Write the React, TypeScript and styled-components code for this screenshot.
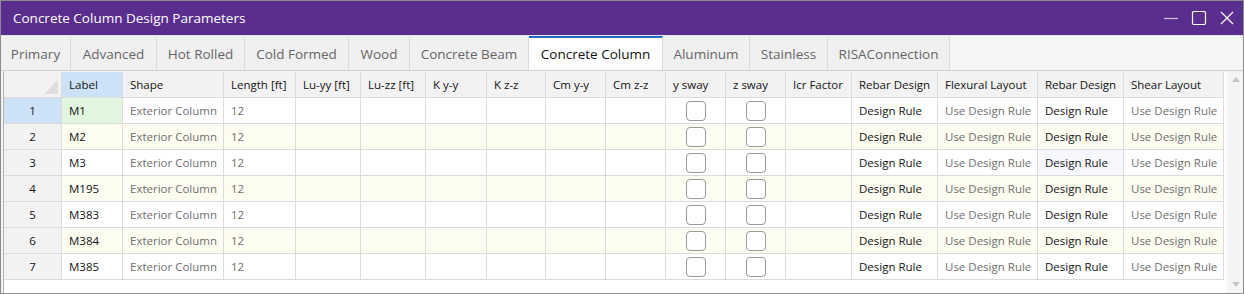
import * as React from 'react';
import styled, { createGlobalStyle } from 'styled-components';

const GlobalStyle = createGlobalStyle`
  html, body {
    margin: 0;
    padding: 0;
    background: #fff;
  }
  body {
    font-family: 'Open Sans', 'Noto Sans', 'Liberation Sans', sans-serif;
  }
`;

const Window = styled.div`
  width: 1244px;
  height: 294px;
  box-sizing: border-box;
  border: 1px solid #8c8c8c;
  background: #f3f3f3;
  display: flex;
  flex-direction: column;
  overflow: hidden;
`;

const TitleBar = styled.div`
  height: 34px;
  flex: none;
  background: #5a2e8f;
  color: #fff;
  display: flex;
  align-items: center;
  justify-content: space-between;
  padding: 0 8px 0 12px;
  font-size: 13.5px;
`;

const WindowButtons = styled.div`
  display: flex;
  align-items: center;
  gap: 12px;
`;

const TabStrip = styled.div`
  height: 36px;
  flex: none;
  box-sizing: border-box;
  display: flex;
  border-top: 1px solid #e2e2e2;
  border-bottom: 1px solid #d4d4d4;
  background: #f5f5f5;
`;

const Tab = styled.div<{ $w: number; $active?: boolean }>`
  width: ${(p) => p.$w}px;
  flex: none;
  box-sizing: border-box;
  display: flex;
  align-items: center;
  justify-content: center;
  font-size: 13.5px;
  border-right: 1px solid #dadada;
  border-top: 2px solid ${(p) => (p.$active ? '#1c6fc4' : 'transparent')};
  background: ${(p) => (p.$active ? '#fff' : '#f0f0f0')};
  color: ${(p) => (p.$active ? '#111' : '#666')};
  padding-bottom: 1px;
`;

const Panel = styled.div`
  flex: 1;
  margin: 0 0 0 2px;
  border-left: 1px solid #b4b4b4;
  border-top: 1px solid #f0f0f0;
  background: #fff;
  display: flex;
`;

const Grid = styled.div`
  display: flex;
  flex-direction: column;
`;

const Row = styled.div`
  display: flex;
  height: 26px;
`;

type Tone = 'head' | 'rowhead' | 'sel' | 'plain' | 'alt' | 'green' | 'hover';

const tones: Record<Tone, string> = {
  head: '#f2f2f2',
  rowhead: '#f2f2f2',
  sel: '#cde2f6',
  plain: '#ffffff',
  alt: '#fdfcf1',
  green: '#e2f5df',
  hover: '#f7f7fe',
};

const Cell = styled.div<{ $w: number; $tone: Tone; $muted?: boolean; $center?: boolean }>`
  width: ${(p) => p.$w}px;
  flex: none;
  box-sizing: border-box;
  height: 26px;
  position: relative;
  display: flex;
  align-items: center;
  justify-content: ${(p) => (p.$center ? 'center' : 'flex-start')};
  padding-left: ${(p) => (p.$center ? 0 : 7)}px;
  border-right: 1px solid #dcdcdc;
  border-bottom: 1px solid #dcdcdc;
  background: ${(p) => tones[p.$tone]};
  color: ${(p) => (p.$muted ? '#707070' : '#141414')};
  font-size: 11.5px;
  white-space: nowrap;
  overflow: hidden;
`;

const CornerMark = styled.div`
  position: absolute;
  right: 3px;
  bottom: 3px;
  width: 0;
  height: 0;
  border-left: 14px solid transparent;
  border-bottom: 14px solid #dedede;
`;

const Check = styled.div`
  width: 20px;
  height: 20px;
  box-sizing: border-box;
  border: 1px solid #9a9a9a;
  border-radius: 4px;
  background: #fff;
`;

const ScrollBar = styled.div`
  width: 17px;
  margin-left: 3px;
  flex: none;
  background: #f4f4f4;
  display: flex;
  flex-direction: column;
  justify-content: space-between;
  align-items: center;
  padding: 5px 0 6px;
  box-sizing: border-box;
`;

const Arrow = styled.div<{ $down?: boolean }>`
  width: 0;
  height: 0;
  border-left: 4px solid transparent;
  border-right: 4px solid transparent;
  ${(p) => (p.$down ? 'border-top: 5px solid #c6c6c6;' : 'border-bottom: 5px solid #c6c6c6;')}
`;

const tabs: [string, number][] = [
  ['Primary', 70],
  ['Advanced', 86],
  ['Hot Rolled', 88],
  ['Cold Formed', 104],
  ['Wood', 61],
  ['Concrete Beam', 119],
  ['Concrete Column', 134],
  ['Aluminum', 87],
  ['Stainless', 78],
  ['RISAConnection', 122],
];

const columns: [string, number][] = [
  ['', 58],
  ['Label', 61],
  ['Shape', 101],
  ['Length [ft]', 72],
  ['Lu-yy [ft]', 65],
  ['Lu-zz [ft]', 65],
  ['K y-y', 61],
  ['K z-z', 59],
  ['Cm y-y', 60],
  ['Cm z-z', 60],
  ['y sway', 60],
  ['z sway', 60],
  ['Icr Factor', 66],
  ['Rebar Design', 86],
  ['Flexural Layout', 100],
  ['Rebar Design', 86],
  ['Shear Layout', 100],
];

const labels = ['M1', 'M2', 'M3', 'M195', 'M383', 'M384', 'M385'];

const w = (i: number) => columns[i][1];

const App = () => {
  return (
    <Window>
      <GlobalStyle />
      <TitleBar>
        <span>Concrete Column Design Parameters</span>
        <WindowButtons>
          <svg width="16" height="14" viewBox="0 0 16 14">
            <line x1="1" y1="7.5" x2="15" y2="7.5" stroke="#cfc4e0" strokeWidth="1.2" />
          </svg>
          <svg width="16" height="14" viewBox="0 0 16 14">
            <rect x="1.5" y="0.5" width="13" height="13" rx="1.5" fill="none" stroke="#fff" strokeWidth="1.2" />
          </svg>
          <svg width="16" height="14" viewBox="0 0 16 14">
            <path d="M2 1 L14 13 M14 1 L2 13" stroke="#fff" strokeWidth="1.2" />
          </svg>
        </WindowButtons>
      </TitleBar>
      <TabStrip>
        {tabs.map(([name, width]) => (
          <Tab key={name} $w={width} $active={name === 'Concrete Column'}>
            {name}
          </Tab>
        ))}
      </TabStrip>
      <Panel>
        <Grid>
          <Row>
            {columns.map(([name, width], i) => (
              <Cell key={i} $w={width} $tone={i === 1 ? 'sel' : 'head'}>
                {name}
                {i === 0 && <CornerMark />}
              </Cell>
            ))}
          </Row>
          {labels.map((label, r) => {
            const tone: Tone = r % 2 === 1 ? 'alt' : 'plain';
            return (
              <Row key={label}>
                <Cell $w={w(0)} $tone={r === 0 ? 'sel' : 'rowhead'} $center>
                  {r + 1}
                </Cell>
                <Cell $w={w(1)} $tone={r === 0 ? 'green' : tone}>
                  {label}
                </Cell>
                <Cell $w={w(2)} $tone={tone} $muted>
                  Exterior Column
                </Cell>
                <Cell $w={w(3)} $tone={tone} $muted>
                  12
                </Cell>
                {[4, 5, 6, 7, 8, 9].map((c) => (
                  <Cell key={c} $w={w(c)} $tone={tone} />
                ))}
                <Cell $w={w(10)} $tone={tone} $center>
                  <Check />
                </Cell>
                <Cell $w={w(11)} $tone={tone} $center>
                  <Check />
                </Cell>
                <Cell $w={w(12)} $tone={tone} />
                <Cell $w={w(13)} $tone={tone}>
                  Design Rule
                </Cell>
                <Cell $w={w(14)} $tone={tone} $muted>
                  Use Design Rule
                </Cell>
                <Cell $w={w(15)} $tone={r === 2 ? 'hover' : tone}>
                  Design Rule
                </Cell>
                <Cell $w={w(16)} $tone={tone} $muted>
                  Use Design Rule
                </Cell>
              </Row>
            );
          })}
        </Grid>
        <ScrollBar>
          <Arrow />
          <Arrow $down />
        </ScrollBar>
      </Panel>
    </Window>
  );
};

export default App;
